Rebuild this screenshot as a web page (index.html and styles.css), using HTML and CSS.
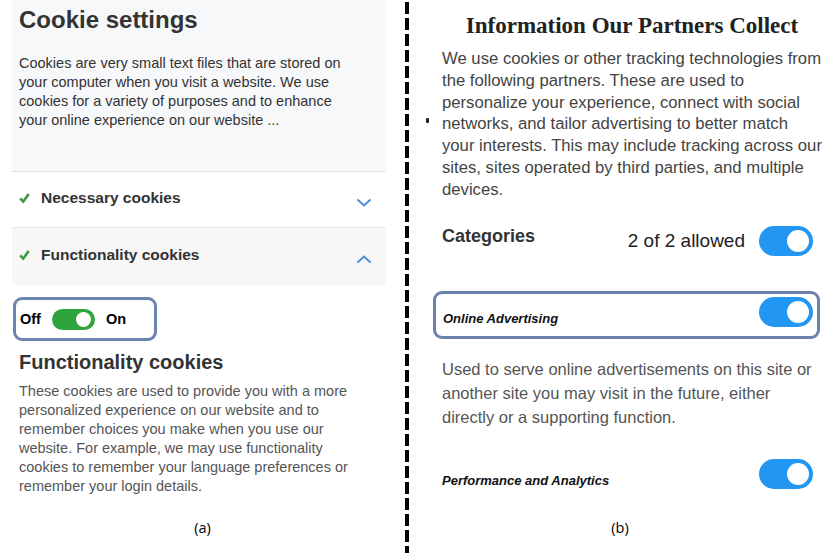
FILE: index.html
```html
<!DOCTYPE html>
<html>
<head>
<meta charset="utf-8">
<link rel="stylesheet" href="styles.css">
</head>
<body>
<div class="page">
  <section class="col-a">
    <div class="panel-a">
      <div class="intro">
        <h1 class="intro-title">Cookie settings</h1>
        <p class="intro-text">Cookies are very small text files that are stored on your computer when you visit a website. We use cookies for a variety of purposes and to enhance your online experience on our website ...</p>
      </div>
      <div class="acc-row">
        <svg class="check" viewBox="0 0 11 11" width="11" height="11"><path d="M0.2 6.2 L2.6 4.6 L4.1 6.7 L8.6 0.3 L10.8 1.7 L4.4 10.6 Z" fill="#3a9a3a"/></svg>
        <span class="acc-label">Necessary cookies</span>
        <svg class="chev" viewBox="0 0 16 9" width="16" height="9"><polyline points="1.5,1.5 8,7.5 14.5,1.5" fill="none" stroke="#4a8fd6" stroke-width="2"/></svg>
      </div>
      <div class="acc-row acc-open">
        <svg class="check" viewBox="0 0 11 11" width="11" height="11"><path d="M0.2 6.2 L2.6 4.6 L4.1 6.7 L8.6 0.3 L10.8 1.7 L4.4 10.6 Z" fill="#3a9a3a"/></svg>
        <span class="acc-label">Functionality cookies</span>
        <svg class="chev" viewBox="0 0 16 9" width="16" height="9"><polyline points="1.5,7.5 8,1.5 14.5,7.5" fill="none" stroke="#4a8fd6" stroke-width="2"/></svg>
      </div>
      <div class="switch-box">
        <span class="sw-text">Off</span>
        <span class="green-toggle"><span class="knob"></span></span>
        <span class="sw-text">On</span>
      </div>
      <h2 class="func-title">Functionality cookies</h2>
      <p class="func-text">These cookies are used to provide you with a more personalized experience on our website and to remember choices you make when you use our website. For example, we may use functionality cookies to remember your language preferences or remember your login details.</p>
    </div>
    <div class="caption">(a)</div>
  </section>
  <div class="divider"></div>
  <section class="col-b">
    <span class="bullet"></span>
    <h1 class="b-title">Information Our Partners Collect</h1>
    <p class="b-text">We use cookies or other tracking technologies from<br>the following partners. These are used to<br>personalize your experience, connect with social<br>networks, and tailor advertising to better match<br>your interests. This may include tracking across our<br>sites, sites operated by third parties, and multiple<br>devices.</p>
    <div class="cat-row">
      <span class="cat-label">Categories</span>
      <span class="cat-count">2 of 2 allowed</span>
      <span class="blue-toggle"><span class="knob"></span></span>
    </div>
    <div class="opt-row opt-boxed">
      <span class="opt-label">Online Advertising</span>
      <span class="blue-toggle"><span class="knob"></span></span>
    </div>
    <p class="opt-desc">Used to serve online advertisements on this site or another site you may visit in the future, either directly or a supporting function.</p>
    <div class="opt-row opt-plain">
      <span class="opt-label">Performance and Analytics</span>
      <span class="blue-toggle"><span class="knob"></span></span>
    </div>
    <div class="caption caption-b">(b)</div>
  </section>
</div>
</body>
</html>
```
FILE: styles.css
```css
html, body {
  margin: 0;
  padding: 0;
  background: #ffffff;
}
body {
  font-family: "Liberation Sans", Arial, sans-serif;
  width: 830px;
  height: 553px;
  overflow: hidden;
}
.page {
  display: flex;
  height: 553px;
}
.col-a {
  width: 405px;
  flex: none;
  display: flex;
  flex-direction: column;
}
.panel-a {
  margin-left: 12px;
  width: 374px;
}
.intro {
  background: #f7f8fa;
  height: 172px;
  box-sizing: border-box;
  padding: 6px 7px 0;
  border-bottom: 1px solid #e2e3e5;
}
.intro-title {
  margin: 0;
  font-size: 24px;
  line-height: 28px;
  font-weight: bold;
  color: #333333;
}
.intro-text {
  margin: 20px 0 0;
  width: 330px;
  font-size: 14.5px;
  line-height: 19px;
  color: #333333;
}
.acc-row {
  height: 56px;
  box-sizing: border-box;
  display: flex;
  align-items: center;
  padding: 0 14px 0 7px;
  border-bottom: 1px solid #e6e6e6;
  background: #ffffff;
}
.acc-open {
  background: #f7f7f7;
  border-bottom: none;
  height: 57px;
}
.check {
  margin-right: 11px;
  margin-top: -3px;
}
.acc-label {
  font-size: 15.5px;
  font-weight: bold;
  color: #333333;
  flex: 1;
  margin-top: -4px;
}
.acc-row .chev {
  margin-top: 6px;
}
.switch-box {
  margin: 12px 0 0 1px;
  width: 144px;
  height: 44px;
  box-sizing: border-box;
  border: 3px solid #6c84b0;
  border-radius: 9px;
  display: flex;
  align-items: center;
  padding: 0 0 0 4px;
  gap: 11px;
}
.sw-text {
  font-size: 14.5px;
  font-weight: bold;
  color: #000000;
}
.green-toggle {
  width: 43px;
  height: 21px;
  border-radius: 11px;
  background: #2fa33e;
  position: relative;
  display: inline-block;
}
.green-toggle .knob {
  position: absolute;
  right: 4px;
  top: 3px;
  width: 15px;
  height: 15px;
  border-radius: 50%;
  background: #ffffff;
}
.func-title {
  margin: 9px 0 0 7px;
  font-size: 20px;
  line-height: 24px;
  font-weight: bold;
  color: #333333;
}
.func-text {
  margin: 8px 0 0 7px;
  width: 336px;
  font-size: 14.5px;
  line-height: 19px;
  color: #555555;
}
.caption {
  font-family: "Open Sans", "Liberation Sans", sans-serif;
  font-size: 14.5px;
  color: #000000;
  text-align: center;
  margin-top: auto;
  padding-bottom: 16px;
}
.caption-b {
  margin-left: -24px;
}
.divider {
  width: 4px;
  flex: none;
  height: 553px;
  background: repeating-linear-gradient(to bottom, #000 0, #000 12px, transparent 12px, transparent 16px);
  margin-top: 2px;
}
.col-b {
  width: 421px;
  flex: none;
  min-width: 0;
  box-sizing: border-box;
  display: flex;
  flex-direction: column;
  padding: 0 8px 0 33px;
  position: relative;
}
.bullet {
  position: absolute;
  left: 17px;
  top: 118px;
  width: 3px;
  height: 5px;
  background: #222;
  border-radius: 1px;
}
.b-title {
  margin: 12px 0 0;
  font-family: "Liberation Serif", "Times New Roman", serif;
  font-size: 23px;
  line-height: 28px;
  font-weight: bold;
  color: #222222;
  text-align: center;
  white-space: nowrap;
}
.b-text {
  margin: 8px 0 0;
  font-size: 16.7px;
  line-height: 21.8px;
  color: #444444;
  white-space: nowrap;
}
.cat-row {
  display: flex;
  align-items: center;
  margin: 24px 9px 0 0;
  height: 32px;
}
.cat-label {
  font-size: 18px;
  font-weight: bold;
  color: #333333;
  flex: 1;
  margin-top: -8px;
}
.cat-count {
  font-size: 19px;
  color: #222222;
  margin-right: 14px;
}
.blue-toggle {
  width: 54px;
  height: 30px;
  border-radius: 15px;
  background: #2196f3;
  position: relative;
  display: inline-block;
  flex: none;
}
.blue-toggle .knob {
  position: absolute;
  right: 4px;
  top: 4px;
  width: 22px;
  height: 22px;
  border-radius: 50%;
  background: #ffffff;
}
.opt-row {
  display: flex;
  align-items: center;
  justify-content: space-between;
  height: 48px;
  box-sizing: border-box;
}
.opt-boxed {
  margin: 34px 0 0 -9px;
  width: 387px;
  border: 3px solid #6b82ad;
  border-radius: 9px;
  padding: 0 4px 0 7px;
}
.opt-label {
  font-size: 13px;
  font-weight: bold;
  font-style: italic;
  color: #111111;
  margin-top: 8px;
}
.opt-row .blue-toggle {
  margin-top: -6px;
}
.opt-desc {
  margin: 18px 0 0;
  font-size: 16.5px;
  line-height: 24px;
  color: #555555;
}
.opt-plain {
  margin-top: 24px;
  padding-right: 9px;
}
```
